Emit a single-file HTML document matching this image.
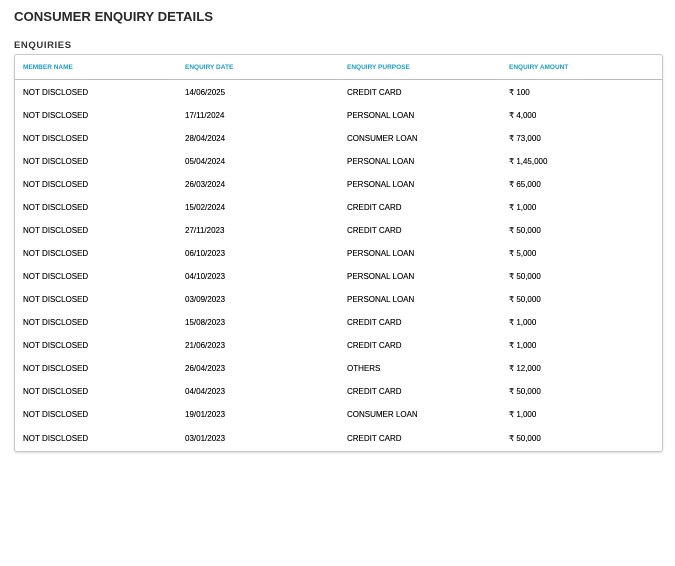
<!DOCTYPE html>
<html><head><style>
body{margin:0;background:#fff;font-family:"Liberation Sans",sans-serif;color:#222;width:675px;height:566px;position:relative;overflow:hidden}
h1{position:absolute;left:14px;top:9px;margin:0;font-size:13.2px;font-weight:bold;color:#2a2a2a}
h2{position:absolute;left:14px;top:40px;margin:0;font-size:9.5px;font-weight:bold;color:#333;letter-spacing:0.6px}
.box{position:absolute;left:14px;top:54px;width:647px;height:396px;border:1px solid #c8c8c8;border-radius:3px;box-shadow:0 1px 2px rgba(0,0,0,.15)}
.hd{position:absolute;left:0;top:0;width:647px;height:24px;border-bottom:1px solid #bbb}
.c{position:absolute;font-size:8px;white-space:nowrap;color:#111;text-shadow:0 0 0.3px #111}
.h{color:#1a9cc4;font-weight:bold;font-size:6.5px;top:9px;text-shadow:none}
</style></head><body>
<h1>CONSUMER ENQUIRY DETAILS</h1>
<h2>ENQUIRIES</h2>
<div class="box"><div class="hd">
<div class="c h" style="left:8px">MEMBER NAME</div>
<div class="c h" style="left:170px">ENQUIRY DATE</div>
<div class="c h" style="left:332px">ENQUIRY PURPOSE</div>
<div class="c h" style="left:494px">ENQUIRY AMOUNT</div>
</div>
<div id="rows"></div>
</div>
<script>
var d=[["14/06/2025","CREDIT CARD","100"],["17/11/2024","PERSONAL LOAN","4,000"],["28/04/2024","CONSUMER LOAN","73,000"],["05/04/2024","PERSONAL LOAN","1,45,000"],["26/03/2024","PERSONAL LOAN","65,000"],["15/02/2024","CREDIT CARD","1,000"],["27/11/2023","CREDIT CARD","50,000"],["06/10/2023","PERSONAL LOAN","5,000"],["04/10/2023","PERSONAL LOAN","50,000"],["03/09/2023","PERSONAL LOAN","50,000"],["15/08/2023","CREDIT CARD","1,000"],["21/06/2023","CREDIT CARD","1,000"],["26/04/2023","OTHERS","12,000"],["04/04/2023","CREDIT CARD","50,000"],["19/01/2023","CONSUMER LOAN","1,000"],["03/01/2023","CREDIT CARD","50,000"]];
var h="";d.forEach(function(r,i){var t=32.5+i*23.07;
h+='<div class="c" style="left:8px;top:'+t+'px">NOT DISCLOSED</div><div class="c" style="left:170px;top:'+t+'px">'+r[0]+'</div><div class="c" style="left:332px;top:'+t+'px">'+r[1]+'</div><div class="c" style="left:494px;top:'+t+'px">₹ '+r[2]+'</div>';});
document.getElementById("rows").innerHTML=h;
</script>
</body></html>
